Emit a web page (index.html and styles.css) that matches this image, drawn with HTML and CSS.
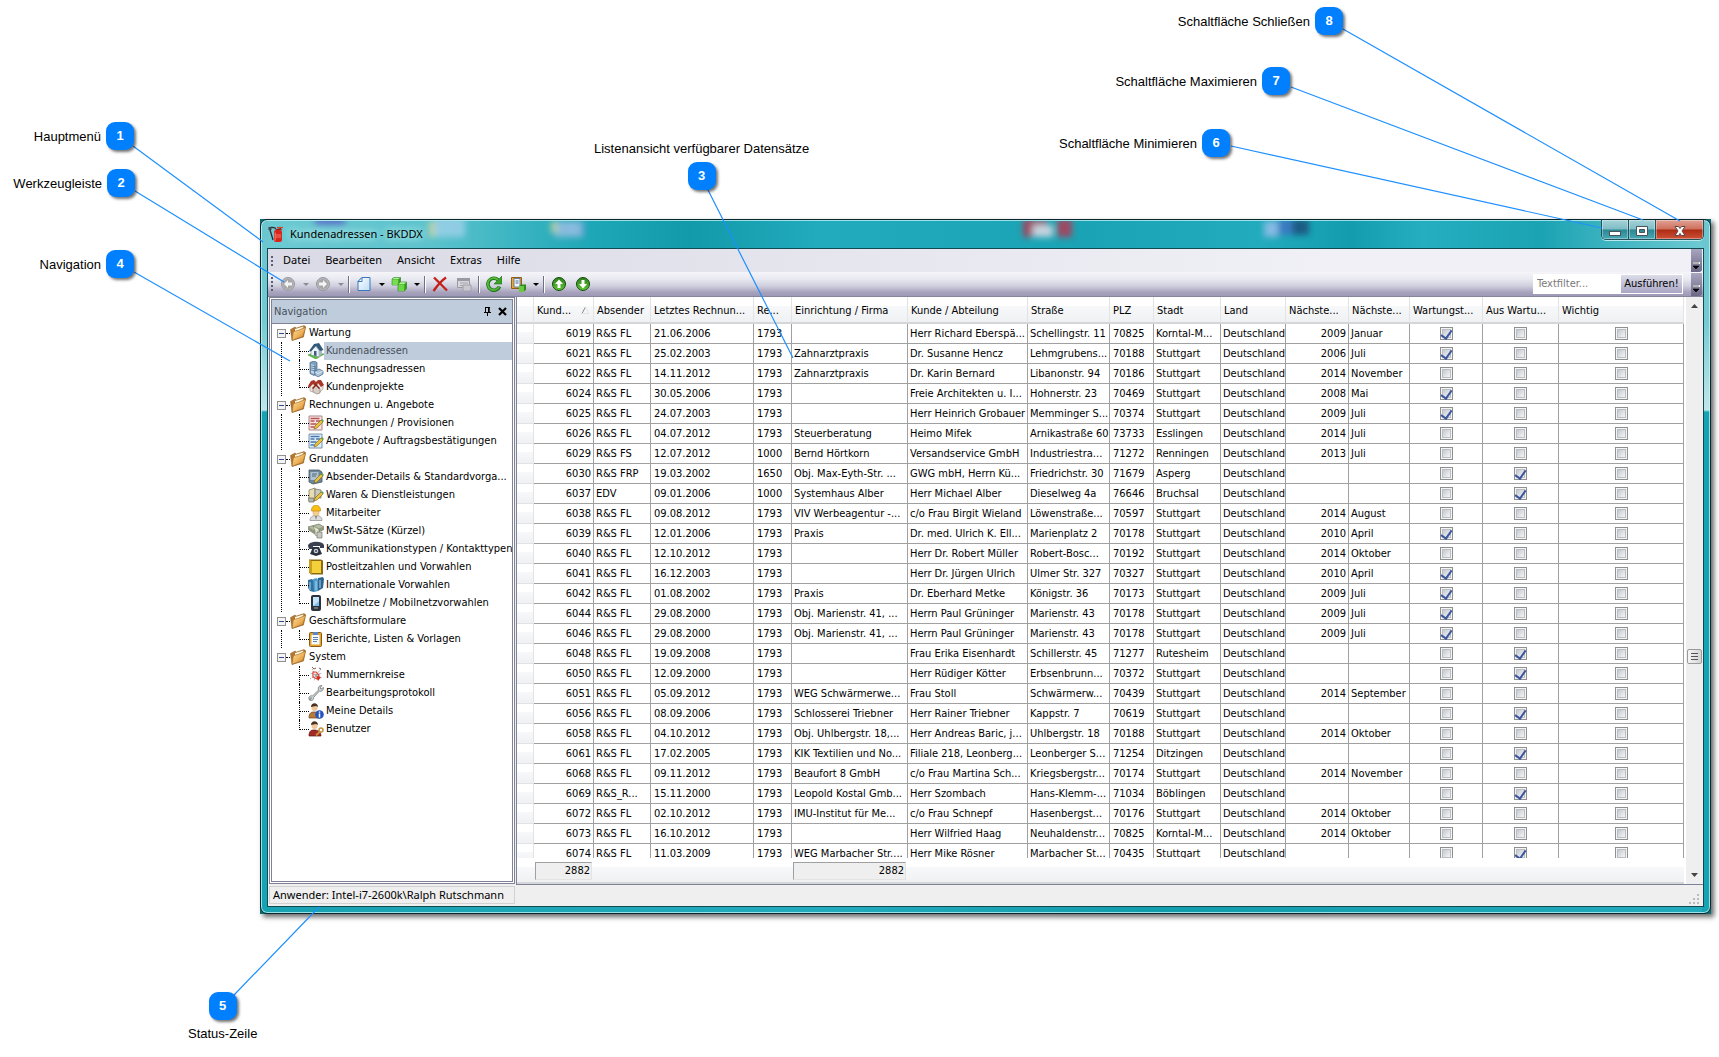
FILE: index.html
```html
<!DOCTYPE html>
<html lang="de">
<head>
<meta charset="utf-8">
<title>Kundenadressen - BKDDX</title>
<link rel="stylesheet" href="styles.css">
</head>
<body>
<svg class="defs" width="0" height="0" aria-hidden="true">
  <defs>
    <linearGradient id="gold" x1="0" y1="0" x2="1" y2="1"><stop offset="0" stop-color="#fde4a8"/><stop offset=".5" stop-color="#f0b65e"/><stop offset="1" stop-color="#c27824"/></linearGradient>
    <linearGradient id="dgreen" x1="0" y1="0" x2="0" y2="1"><stop offset="0" stop-color="#2f7d1e"/><stop offset="1" stop-color="#5cc832"/></linearGradient>
    <linearGradient id="page" x1="0" y1="0" x2="1" y2="1"><stop offset="0" stop-color="#fff"/><stop offset="1" stop-color="#bcdcf6"/></linearGradient>
    <filter id="soft" x="-30%" y="-30%" width="160%" height="160%"><feGaussianBlur stdDeviation="3"/></filter>
    <symbol id="i-folder" viewBox="0 0 16 16"><path d="M.5 4.500L5 2l1.500 1L14 .6l1.500 1L13.500 12 2 15.500z" fill="#b5762e" stroke="#8c5a20" stroke-width=".5"/><path d="M5 4l8.500-2.400-.8 4L5 7z" fill="#fff8e2"/><path d="M3.400 6.500l4.600-1 7.600-3.300L13 11.500 2 15.300z" fill="url(#gold)" stroke="#9a6424" stroke-width=".6"/></symbol>
    <symbol id="i-house" viewBox="0 0 16 16"><path d="M0 12l5-2 11 1-8 5z" fill="#5bbd3e" stroke="#2f8a22" stroke-width=".5"/><path d="M3 7l4-4 4 4v7l-4-1-4-1z" fill="#eef3f8" stroke="#7d8e9e" stroke-width=".6"/><path d="M11 7l3-1v5l-3 3z" fill="#a9b9c8"/><path d="M1 8l5-7 5-1 4.500 7L12 8 8 3 3 8.500z" fill="#33597a"/><path d="M6 8h2.500v5L6 12.500z" fill="#3c5d7c"/></symbol>
    <symbol id="i-building" viewBox="0 0 16 16"><path d="M2 1.500l4-1.500 3 1.500v11l-3 2-4-2z" fill="#7fa0bd" stroke="#3f617f" stroke-width=".7"/><path d="M3 3l3 1v9l-3-1z" fill="#bcd4e8"/><path d="M3 5l5 1M3 7l5 1M3 9l5 1" stroke="#4a6d8c" stroke-width=".7"/><path d="M7 10l4-2 4 2v3l-5 3-3-2z" fill="#a9c3da" stroke="#3f617f" stroke-width=".7"/><path d="M7 11l3 1.500 5-2.500" fill="none" stroke="#f4faff" stroke-width=".7"/></symbol>
    <symbol id="i-houses" viewBox="0 0 16 16"><path d="M2 7l3-3 3 3v5l-3 1-3-1zM9 6l2-3 4 3v4l-3 3-3-1z" fill="#ece6df" stroke="#8d7f76" stroke-width=".5"/><path d="M0 7l3-5 3-1 2 2 2-2 3 0 3 5-3 2-3-4-2 4-3-3-4 4z" fill="#a83528"/><path d="M5 9l3-3 4 4v4l-3 1-4-2z" fill="#d8cec4" stroke="#6d5a50" stroke-width=".5"/><path d="M4 9l4-4 4 4-1 1-3-3-3 3z" fill="#812318"/></symbol>
    <symbol id="i-redform" viewBox="0 0 16 16"><path d="M1 1h13v14H1z" fill="#fbe1e1" stroke="#a88"/><path d="M2.500 3.500h9M2.500 6h4M8 6h4M2.500 9h6M2.500 12h4" stroke="#b25656" stroke-width="1.400"/><path d="M6 14l1-3 6-6 2 2-6 6z" fill="#e9c13c" stroke="#6f6020" stroke-width=".6"/><path d="M13 5l1-1 2 2-1 1z" fill="#5aa84a"/></symbol>
    <symbol id="i-blueform" viewBox="0 0 16 16"><path d="M1 1h13v14H1z" fill="#dcecfb" stroke="#7890ac"/><path d="M2.500 3.500h9M2.500 6h4M8 6h4M2.500 9h6M2.500 12h4" stroke="#4a78ae" stroke-width="1.400"/><path d="M6 14l1-3 6-6 2 2-6 6z" fill="#e9c13c" stroke="#6f6020" stroke-width=".6"/><path d="M13 5l1-1 2 2-1 1z" fill="#5aa84a"/></symbol>
    <symbol id="i-note" viewBox="0 0 16 16"><path d="M1 1h10l3 2v10l-9 2-4-2z" fill="#6e8798" stroke="#3f5566" stroke-width=".8"/><path d="M2.500 3h8v8h-8z" fill="#aec2cf"/><path d="M4 5h5M4 7h4" stroke="#4c6678"/><path d="M6 14l1-3 6-6 2 2-6 6z" fill="#e9c13c" stroke="#6f6020" stroke-width=".6"/><path d="M13 5l1-1 2 2-1 1z" fill="#5aa84a"/></symbol>
    <symbol id="i-goods" viewBox="0 0 16 16"><path d="M1 3l6-2v12l-6-1z" fill="#e6ddb4" stroke="#857d5a" stroke-width=".8"/><path d="M7 2l6 1v8H7z" fill="#c9c9c0" stroke="#77776c" stroke-width=".8"/><path d="M0 11h6v4H1z" fill="#b4b6ae" stroke="#66685f" stroke-width=".7"/><path d="M6 14l1-3 6-6 2 2-6 6z" fill="#e9c13c" stroke="#6f6020" stroke-width=".6"/><path d="M13 5l1-1 2 2-1 1z" fill="#5aa84a"/></symbol>
    <symbol id="i-worker" viewBox="0 0 16 16"><path d="M2 15.500c0-3 2-5 6-5s6 2 6 5z" fill="#ddd" stroke="#888" stroke-width=".7"/><path d="M5 5h6v3c0 4-6 4-6 0z" fill="#f5cf92" stroke="#b98a4a" stroke-width=".4"/><path d="M3.500 5c0-6.500 9-6.500 9 0v1h-9z" fill="#f9bf14" stroke="#b97d06" stroke-width=".6"/><path d="M7 11l1 4 1-4z" fill="#7a7a7a"/></symbol>
    <symbol id="i-money" viewBox="0 0 16 16"><path d="M0 4l11-3 5 3-10 4z" fill="#b5bda4" stroke="#6f7761" stroke-width=".7"/><path d="M0 4v3l6 4 10-4V4L6 8z" fill="#8f987d"/><path d="M5 3l6 3v8l-4-2V8z" fill="#dfe6cd" stroke="#6f7761" stroke-width=".6"/><path d="M9 9h5v6H9z" fill="#c8c8c4" stroke="#77776c" stroke-width=".7"/></symbol>
    <symbol id="i-phone" viewBox="0 0 16 16"><path d="M0 5c0-5 14-6 16-1v3h-4V5H5v3H1z" fill="#3a4050"/><path d="M5 6h6l3 7-6 2-6-2z" fill="#2b303e"/><circle cx="8" cy="10" r="2.300" fill="#c9ced8"/><circle cx="8" cy="10" r="1" fill="#39404f"/></symbol>
    <symbol id="i-book" viewBox="0 0 16 16"><path d="M1 .6h12l2 1V15.400H3l-2-2z" fill="#8c6c12"/><path d="M4 2h9v12H4z" fill="#f3cf3a"/><path d="M1 1l3 1v13l-3-1.500z" fill="#caa01c"/></symbol>
    <symbol id="i-books" viewBox="0 0 16 16"><path d="M0 3l4-1 2 2v11l-4-1-2-3z" fill="#2f719f"/><path d="M5 2l4-1 1 2v11l-4 1z" fill="#4f9bcb"/><path d="M10 1l5-1 1 2-1 9-5 3z" fill="#2b6590"/><path d="M2 5v8M8 4v9M12 3v8" stroke="#bfe0f4" stroke-width=".9"/></symbol>
    <symbol id="i-mobile" viewBox="0 0 16 16"><rect x="3" y="0" width="10" height="16" rx="2" fill="#2d333c"/><path d="M5 2h6v9H5z" fill="#7fc0f0"/><path d="M5 11l6-5V2H5z" fill="#c4e4fb"/><path d="M6 13h4" stroke="#aaa"/></symbol>
    <symbol id="i-clip" viewBox="0 0 16 16"><rect x="1.500" y="1.500" width="12" height="14" rx="1" fill="#e7a42d" stroke="#8a5c12"/><path d="M3.500 4h8v9.500h-8z" fill="#f3f8ff"/><path d="M5 6.500h5M5 8.500h5M5 10.500h4" stroke="#5a86b8"/><path d="M5 1h5v3H5z" fill="#5a86c8"/></symbol>
    <symbol id="i-circles" viewBox="0 0 16 16"><path d="M8 8L4 2M8 8L2 6M8 8l-6 4M8 8l5-6M8 8l6-2M8 8l6 3M8 8l-2 6" stroke="#9aa" stroke-width="1" stroke-dasharray="2 1"/><path d="M5 5l3 0 3 3-2 4-4-2z" fill="none" stroke="#e04030" stroke-width="1.200"/><path d="M8 9l5 1-3 4z" fill="#d62a1c"/><path d="M4 0l2 2 2-1M11 1l2 1" stroke="#8a5a50" fill="none"/></symbol>
    <symbol id="i-wrench" viewBox="0 0 16 16"><path d="M1.500 15c-2-3 1-5 3-4l6-6c-1-3 1-4.500 3.500-4.500L12 3l1 1 2.500-1.500c0 3-2 4.500-4 3.500l-6 6.500c1 2-2 4-4 2.500l2-1.500-.6-1z" fill="#cfd3d4" stroke="#70787a" stroke-width=".8"/></symbol>
    <symbol id="i-userinfo" viewBox="0 0 16 16"><path d="M1 15c0-5 2-6 5-6s6 1 6 6z" fill="#b97a3a" stroke="#6b431c" stroke-width=".7"/><circle cx="6.500" cy="5" r="3" fill="#f0c79a"/><path d="M3 4c0-5 7-5 7 0L8 3z" fill="#4d3120"/><circle cx="11.500" cy="11.500" r="4.300" fill="#2454c0"/><path d="M11.500 10.500v4M11.500 8.400v1.300" stroke="#fff" stroke-width="1.500"/></symbol>
    <symbol id="i-userkey" viewBox="0 0 16 16"><path d="M1 15c0-5 2-6 5-6s7 1 7 6z" fill="#a32a26" stroke="#5b1512" stroke-width=".7"/><circle cx="6.500" cy="5" r="3" fill="#f0c79a"/><path d="M3 4c0-5 7-5 7 0L8 3z" fill="#4d3120"/><circle cx="13" cy="9" r="2" fill="none" stroke="#c4923a" stroke-width="1.500"/><path d="M12 10.500l-4 4" stroke="#c4923a" stroke-width="1.800"/></symbol>
    <symbol id="i-ext" viewBox="0 0 16 16"><path d="M8 2.500C4 .5 1 1 2 4s2 6 3 10" fill="none" stroke="#30282a" stroke-width="1.300"/><path d="M.5 1h3v3h-3z" fill="#445"/><rect x="6" y="4" width="8" height="12" rx="2" fill="#d8261c"/><path d="M6.500 6.500h1.500v8H6.500z" fill="#f0655a"/><path d="M8 3l5-1 1 2H7z" fill="#9b2018"/><path d="M9 1.500h6" stroke="#d8402c" stroke-width="1.200"/><path d="M8 9h5M8 11h5" stroke="#f0908a" stroke-width=".8"/></symbol>
    <symbol id="i-back" viewBox="0 0 16 16"><circle cx="8" cy="8" r="6.500" fill="#b9b9bc" stroke="#98989e"/><circle cx="8" cy="8" r="5" fill="#a6a6a8"/><path d="M8 4L4 8l4 4V9.500h4v-3H8z" fill="#f4f4f4"/></symbol>
    <symbol id="i-fwd" viewBox="0 0 16 16"><circle cx="8" cy="8" r="6.500" fill="#b9b9bc" stroke="#98989e"/><circle cx="8" cy="8" r="5" fill="#a6a6a8"/><path d="M8 4l4 4-4 4V9.500H4v-3h4z" fill="#f4f4f4"/></symbol>
    <symbol id="i-new" viewBox="0 0 16 16"><path d="M6 1.500h8v13H2v-9z" fill="url(#page)" stroke="#3d78bc"/><path d="M6 1.500v4H2z" fill="#fff" stroke="#3d78bc"/></symbol>
    <symbol id="i-cubes" viewBox="0 0 16 16"><path d="M1 3l2-1.500h6.500V7l-2 2H1z" fill="#2f9c1b" stroke="#1c6a10" stroke-width=".5"/><path d="M1.300 3.300h6V9h-6z" fill="#78dd52"/><path d="M7 8l2-2h6.500v6.500l-2 2.500H7z" fill="#2f9c1b" stroke="#1c6a10" stroke-width=".5"/><path d="M7.300 8.300h6V15h-6z" fill="#6cd646"/><path d="M1.500 3l1.700-1.200h6L7.500 3zM7.500 8l1.700-1.700h6L13.500 8z" fill="#b2f094"/></symbol>
    <symbol id="i-delete" viewBox="0 0 16 16"><path d="M2 1.500c3 3 9 9 13 13M14 1.500C9 5 5 10 1.500 15" fill="none" stroke="#c3201a" stroke-width="2.300"/></symbol>
    <symbol id="i-grid" viewBox="0 0 16 16"><path d="M1.500 2.500h12v9h-12z" fill="#d6d6dc" stroke="#9a9aa0"/><path d="M1 2h13v3H1z" fill="#9a9aa0"/><path d="M4 7h8M4 9.500h8" stroke="#a4a4aa"/><path d="M7 9h8v6H7z" fill="#c9c9cf" stroke="#a2a2a8"/></symbol>
    <symbol id="i-refresh" viewBox="0 0 16 16"><path d="M13.500 10.500A6 6 0 1 1 12 3.800" fill="none" stroke="#1f7516" stroke-width="3.600"/><path d="M13.200 10.500A6 6 0 1 1 12 3.800" fill="none" stroke="#55bb3c" stroke-width="1.800"/><path d="M16 0v8H8z" fill="#3aa326" stroke="#1f7516" stroke-width=".6"/></symbol>
    <symbol id="i-paste" viewBox="0 0 16 16"><path d="M1.500 1.500h10v11h-10z" fill="#e9aa33" stroke="#8f6112"/><path d="M4 2.500h6v8.500H4z" fill="#f2f6fc" stroke="#48689c" stroke-width=".8"/><path d="M5.500 5h3M5.500 7h3" stroke="#48689c"/><path d="M9 10l2-1.500h5V13.500l-2 2H9z" fill="#2f8a1b"/><path d="M9 10h5v6H9z" fill="#6ac940"/></symbol>
    <symbol id="i-up" viewBox="0 0 16 16"><circle cx="8" cy="8" r="6.500" fill="url(#dgreen)" stroke="#174d0e"/><path d="M8 3.500l4 4.500H9.500v4h-3V8H4z" fill="#fff"/></symbol>
    <symbol id="i-down" viewBox="0 0 16 16"><circle cx="8" cy="8" r="6.500" fill="url(#dgreen)" stroke="#174d0e"/><path d="M8 12.500L4 8h2.500V4h3v4H12z" fill="#fff"/></symbol>
    <symbol id="i-pin" viewBox="0 0 9 9"><path d="M2 .5h5M2.500 .5v5M6 .5v5M1 5.500h7M4.500 6v3" stroke="#000" fill="none"/><path d="M5 0h1.500v5.500H5z"/></symbol>
    <symbol id="i-x" viewBox="0 0 9 9"><path d="M1 1l7 7M8 1L1 8" stroke="#000" stroke-width="2.200"/></symbol>
  </defs>
</svg>

<main class="diagram">
  <section class="window-back">
  <div class="window">
    <header class="titlebar">
      <svg class="titlebar-reflection" width="1400" height="28" aria-hidden="true"><g filter="url(#soft)">
        <rect x="48" y="-6" width="30" height="10" fill="#5a62c8"/><rect x="168" y="-4" width="30" height="20" fill="#9fd0ea"/><rect x="162" y="0" width="6" height="16" fill="#d8d79a"/>
        <rect x="288" y="0" width="26" height="16" fill="#a2bfe6"/><rect x="284" y="0" width="6" height="12" fill="#d8d79a"/><rect x="314" y="0" width="3" height="16" fill="#7aa0dd"/>
        <rect x="756" y="-2" width="24" height="18" fill="#c0304e"/><rect x="766" y="4" width="20" height="12" fill="#f0dfe8"/><rect x="790" y="-2" width="15" height="18" fill="#c0304e"/>
        <rect x="997" y="0" width="14" height="16" fill="#9fc0ee"/><rect x="1011" y="-2" width="14" height="16" fill="#3f72c4"/><rect x="1025" y="-2" width="17" height="16" fill="#1c4a78"/></g>
      </svg>
      <svg class="icon"><use href="#i-ext"/></svg>
      <h1 class="title">Kundenadressen - BKDDX</h1>
      <div class="caption-buttons">
        <button class="cap" aria-label="Minimieren"><svg width="14" height="14"><rect x="1.500" y="7.500" width="11" height="4" fill="#fff" stroke="#4a5458"/></svg></button>
        <button class="cap" aria-label="Maximieren"><svg width="14" height="14"><path fill-rule="evenodd" d="M1.500 2.500h11v9h-11zM4.500 5.500v3h5v-3z" fill="#fff" stroke="#4a5458"/></svg></button>
        <button class="cap cap-close" aria-label="Schließen"><svg width="14" height="14"><path d="M2 2.500h3.500L7 4.500l1.500-2H12L9 7l3 4.500H8.500L7 9.500l-1.500 2H2L5 7z" fill="#fff" stroke="#5a4644"/></svg></button>
      </div>
    </header>

    <div class="client">
      <nav class="menubar">
        <span class="grip"></span>
        <button>Datei</button><button>Bearbeiten</button><button>Ansicht</button><button>Extras</button><button>Hilfe</button>
        <button class="overflow" aria-label="Menüoptionen"><svg width="7" height="8"><path d="M0 1h7" stroke="#fff" stroke-width="2"/><path d="M0 1h6M0 4h6L3 7z" fill="#000" stroke="#000" stroke-width=".6"/></svg></button>
      </nav>
      <div class="toolbar">
        <span class="grip grip-tall"></span>
        <button class="tb" aria-label="Zurück"><svg class="icon"><use href="#i-back"/></svg></button><button class="drop off" aria-label="Verlauf zurück"></button>
        <button class="tb" aria-label="Vorwärts"><svg class="icon"><use href="#i-fwd"/></svg></button><button class="drop off" aria-label="Verlauf vorwärts"></button>
        <span class="sep"></span>
        <button class="tb" aria-label="Neu"><svg class="icon"><use href="#i-new"/></svg></button><button class="drop" aria-label="Neu Optionen"></button>
        <button class="tb" aria-label="Objekte"><svg class="icon"><use href="#i-cubes"/></svg></button><button class="drop" aria-label="Objekt Optionen"></button>
        <span class="sep"></span>
        <button class="tb" aria-label="Löschen"><svg class="icon"><use href="#i-delete"/></svg></button>
        <button class="tb" aria-label="Formular"><svg class="icon"><use href="#i-grid"/></svg></button>
        <span class="sep"></span>
        <button class="tb" aria-label="Aktualisieren"><svg class="icon"><use href="#i-refresh"/></svg></button>
        <button class="tb" aria-label="Berichte"><svg class="icon"><use href="#i-paste"/></svg></button><button class="drop" aria-label="Bericht Optionen"></button>
        <span class="sep"></span>
        <button class="tb" aria-label="Vorheriger"><svg class="icon"><use href="#i-up"/></svg></button>
        <button class="tb" aria-label="Nächster"><svg class="icon"><use href="#i-down"/></svg></button>
        <form class="filter">
          <input type="text" placeholder="Textfilter..." aria-label="Textfilter">
          <button type="button">Ausführen!</button>
        </form>
        <button class="overflow" aria-label="Symbolleistenoptionen"><svg width="7" height="8"><path d="M0 1h7" stroke="#fff" stroke-width="2"/><path d="M0 1h6M0 4h6L3 7z" fill="#000" stroke="#000" stroke-width=".6"/></svg></button>
      </div>

      <div class="workspace">
        <aside class="navpanel">
          <header class="navhead"><h2>Navigation</h2>
            <button aria-label="Anheften"><svg width="9" height="9"><use href="#i-pin"/></svg></button>
            <button aria-label="Schließen"><svg width="9" height="9"><use href="#i-x"/></svg></button>
          </header>
          <ul class="tree">
            <li><div class="group"><span class="box"></span><svg class="icon"><use href="#i-folder"/></svg>Wartung</div>
              <ul>
                <li><svg class="icon"><use href="#i-house"/></svg><a href="#" class="current">Kundenadressen</a></li>
                <li><svg class="icon"><use href="#i-building"/></svg><a href="#">Rechnungsadressen</a></li>
                <li><svg class="icon"><use href="#i-houses"/></svg><a href="#">Kundenprojekte</a></li>
              </ul></li>
            <li><div class="group"><span class="box"></span><svg class="icon"><use href="#i-folder"/></svg>Rechnungen u. Angebote</div>
              <ul>
                <li><svg class="icon"><use href="#i-redform"/></svg><a href="#">Rechnungen / Provisionen</a></li>
                <li><svg class="icon"><use href="#i-blueform"/></svg><a href="#">Angebote / Auftragsbestätigungen</a></li>
              </ul></li>
            <li><div class="group"><span class="box"></span><svg class="icon"><use href="#i-folder"/></svg>Grunddaten</div>
              <ul>
                <li><svg class="icon"><use href="#i-note"/></svg><a href="#">Absender-Details &amp; Standardvorga...</a></li>
                <li><svg class="icon"><use href="#i-goods"/></svg><a href="#">Waren &amp; Dienstleistungen</a></li>
                <li><svg class="icon"><use href="#i-worker"/></svg><a href="#">Mitarbeiter</a></li>
                <li><svg class="icon"><use href="#i-money"/></svg><a href="#">MwSt-Sätze (Kürzel)</a></li>
                <li><svg class="icon"><use href="#i-phone"/></svg><a href="#">Kommunikationstypen / Kontakttypen</a></li>
                <li><svg class="icon"><use href="#i-book"/></svg><a href="#">Postleitzahlen und Vorwahlen</a></li>
                <li><svg class="icon"><use href="#i-books"/></svg><a href="#">Internationale Vorwahlen</a></li>
                <li><svg class="icon"><use href="#i-mobile"/></svg><a href="#">Mobilnetze / Mobilnetzvorwahlen</a></li>
              </ul></li>
            <li><div class="group"><span class="box"></span><svg class="icon"><use href="#i-folder"/></svg>Geschäftsformulare</div>
              <ul>
                <li><svg class="icon"><use href="#i-clip"/></svg><a href="#">Berichte, Listen &amp; Vorlagen</a></li>
              </ul></li>
            <li><div class="group"><span class="box"></span><svg class="icon"><use href="#i-folder"/></svg>System</div>
              <ul>
                <li><svg class="icon"><use href="#i-circles"/></svg><a href="#">Nummernkreise</a></li>
                <li><svg class="icon"><use href="#i-wrench"/></svg><a href="#">Bearbeitungsprotokoll</a></li>
                <li><svg class="icon"><use href="#i-userinfo"/></svg><a href="#">Meine Details</a></li>
                <li><svg class="icon"><use href="#i-userkey"/></svg><a href="#">Benutzer</a></li>
              </ul></li>
          </ul>
        </aside>

        <section class="gridpanel">
          <div class="gridmain">
            <div class="viewport">
              <table class="records">
                <colgroup><col class="w-mark"><col class="w-nr"><col class="w-abs"><col class="w-date"><col class="w-re"><col class="w-firma"><col class="w-kunde"><col class="w-str"><col class="w-plz"><col class="w-stadt"><col class="w-land"><col class="w-jahr"><col class="w-monat"><col class="w-wt"><col class="w-aus"><col></colgroup>
                <thead><tr><th></th><th>Kund...<svg class="sort" width="9" height="8"><path d="M1 7.500L4.500 1" stroke="#888" fill="none"/><path d="M4.500 1L8 7.500H1" stroke="#e4e4e4" fill="none"/></svg></th><th>Absender</th><th>Letztes Rechnun...</th><th>Re...</th><th>Einrichtung / Firma</th><th>Kunde / Abteilung</th><th>Straße</th><th>PLZ</th><th>Stadt</th><th>Land</th><th>Nächste...</th><th>Nächste...</th><th>Wartungst...</th><th>Aus Wartu...</th><th>Wichtig</th></tr></thead>
                <tbody id="rows"></tbody>
              </table>
            </div>
            <footer class="sums"><output class="sum-nr">2882</output><output class="sum-firma">2882</output></footer>
          </div>
          <div class="scrollbar">
            <svg width="7" height="4"><path d="M0 4l3.500-4L7 4z" fill="#444"/></svg>
            <span class="thumb"></span>
            <svg width="7" height="4"><path d="M0 0h7L3.500 4z" fill="#444"/></svg>
          </div>
        </section>
      </div>

      <footer class="status"><span class="user">Anwender: Intel-i7-2600k\Ralph Rutschmann</span>
        <svg width="10" height="10"><path d="M8 0h2v2H8zM4 4h2v2H4zM8 4h2v2H8zM0 8h2v2H0zM4 8h2v2H4zM8 8h2v2H8z" fill="#bbb"/></svg>
      </footer>
    </div>
  </div>
  </section>

  <svg class="leaders" width="1719" height="1057" aria-hidden="true"><path d="M133 146L263 242M135 191L284 282M134 272L290 361M707 188L793 358M234 995L319 907M1231 146L1602 228M1291 87L1643 220M1343 29L1680 221"/></svg>

  <div class="callout c1"><span>Hauptmenü</span><b>1</b></div>
  <div class="callout c2"><span>Werkzeugleiste</span><b>2</b></div>
  <div class="callout c4"><span>Navigation</span><b>4</b></div>
  <div class="callout c6"><span>Schaltfläche Minimieren</span><b>6</b></div>
  <div class="callout c7"><span>Schaltfläche Maximieren</span><b>7</b></div>
  <div class="callout c8"><span>Schaltfläche Schließen</span><b>8</b></div>
  <div class="callout stacked c3"><span>Listenansicht verfügbarer Datensätze</span><b>3</b></div>
  <div class="callout stacked c5"><b>5</b><span>Status-Zeile</span></div>
</main>
<script src="app.js"></script>
</body>
</html>
```
FILE: styles.css
```css
* { box-sizing: border-box; }
body { margin: 0; background: #fff; color: #000; font: 11px/14px "DejaVu Sans Condensed", "DejaVu Sans", sans-serif; }
button, input { font: inherit; color: inherit; margin: 0; padding: 0; border: 0; background: none; }
button { display: flex; align-items: center; justify-content: center; }
h1, h2 { margin: 0; font: inherit; }
ul { list-style: none; margin: 0; padding: 0; }
.defs { position: absolute; }
.icon { width: 16px; height: 16px; flex: none; display: block; }

.diagram { position: relative; padding: 219px 8px 143px 260px; overflow: hidden; }

/* window frame */
.window-back { background: #0c6a70; box-shadow: 3px 3px 5px rgba(0,0,0,.6); }
.window {
  border: 1px solid #08282d; border-radius: 7px; padding: 0 6px 6px;
  box-shadow: inset 0 0 0 1px rgba(200,245,248,.75);
  background:
    linear-gradient(#6ac5cf 0, #74cad3 100px, #c0e6ea 190px, #16a3b3 192px) 0 0 / 8px 100% no-repeat,
    linear-gradient(#6ac5cf 0, #74cad3 100px, #c0e6ea 190px, #16a3b3 192px) 100% 0 / 8px 100% no-repeat,
    linear-gradient(90deg, #18a2b2, #22abbc 560px, #129dad 900px, #22abbc 100%) 0 100% / 100% 8px no-repeat,
    linear-gradient(90deg, #6ccad2 0, #5cc3cd 170px, #1ea7b7 330px, #129aab 430px, #22abbc 560px, #1aa3b4 820px, #22abbc 1000px, #129cad 1090px, #24aebf 1160px, #1ba3b3 1280px, #6cc9d2 1440px);
}
.titlebar { position: relative; height: 28px; display: flex; align-items: center; gap: 6px; padding-left: 1px; overflow: hidden; font: 11px/16px "Noto Sans", sans-serif; }
.titlebar-reflection { position: absolute; left: 0; top: 1px; opacity: .8; }
.titlebar > .icon, .title { position: relative; }
.title { text-shadow: 0 0 8px #c5f2f2, 0 0 10px #c5f2f2; }
.caption-buttons { position: relative; display: flex; align-self: flex-start; margin-left: auto; height: 20px; border: 1px solid #24505a; border-top: 0; border-radius: 0 0 5px 5px; overflow: hidden; box-shadow: 0 1px 0 #b8e8ec; }
.cap { width: 27px; padding-top: 2px; border-right: 1px solid #24505a; background: linear-gradient(#a5d3d9 0, #7fbcc5 9px, #2b8794 10px, #48a9b5 100%); box-shadow: inset 0 0 0 1px rgba(255,255,255,.35); }
.cap-close { width: 47px; border-right: 0; background: linear-gradient(#e0a295 0, #cf6f5c 9px, #ae2b14 10px, #cc5236 100%); }
.client { border: 1px solid #114a52; background: #efefef; }

/* menu and toolbar */
.menubar, .toolbar { display: flex; align-items: center; padding-right: 1px; }
.menubar { height: 23px; gap: 15px; font-family: "Noto Sans", sans-serif; background: linear-gradient(90deg, #dadae6, #f0f0f6 75%); }
.menubar button { padding-bottom: 2px; }
.grip { width: 8px; height: 12px; margin-right: -8px; background: radial-gradient(circle, #5c5c78 1px, transparent 1px) 0 0 / 8px 4px; }
.toolbar { height: 25px; border-bottom: 1px solid #85859b; background: linear-gradient(#f4f4f9 0, #e9e9f1 7px, #cfcfde 14px, #a9a4bd 20px, #9d98b5 100%); }
.grip-tall { height: 16px; margin-right: 0; }
.tb { width: 24px; height: 22px; }
.drop { width: 11px; height: 22px; }
.drop::after { content: ""; border: 3px solid transparent; border-top-color: #000; border-bottom: 0; }
.drop.off::after { border-top-color: #8c8c94; }
.sep { width: 6px; height: 17px; background: linear-gradient(90deg, transparent 2px, #6f6f88 2px, #6f6f88 3px, #fff 3px, #fff 4px, transparent 4px); }
.filter { display: flex; margin: 0 8px 0 auto; width: 150px; height: 20px; padding: 1px; background: #fff; }
.filter input { flex: 1; min-width: 0; padding: 0 3px; outline: 0; }
.filter input::placeholder { color: #7a7a7a; opacity: 1; }
.filter button { width: 61px; background: linear-gradient(#dcdce8, #a9a6c4); }
.overflow { width: 11px; height: 23px; align-items: flex-end; padding-bottom: 3px; background: linear-gradient(#a9a5bf, #6b6886); border-radius: 0 0 3px 0; }
.menubar .overflow { margin-left: auto; }

/* navigation tree */
.workspace { display: flex; }
.navpanel { flex: none; width: 246px; margin: 0 1px 1px; border: 3px double #7f8296; background: #fff; }
.navhead { display: flex; align-items: center; gap: 6px; height: 24px; padding: 0 5px 0 2px; background: #bfccdb; border-bottom: 1px solid #7f8296; }
.navhead h2 { flex: 1; color: #46505c; }
.tree { padding-left: 5px; }
.group { display: flex; align-items: center; height: 18px; line-height: 18px; }
.group .icon { margin-right: 3px; }
.group::before { content: ""; width: 4px; border-top: 1px dotted #000; }
.group .box { order: -1; width: 9px; height: 9px; border: 1px solid #919191; background: linear-gradient(#2f4a9a, #2f4a9a) center / 5px 1px no-repeat #f4f4f4; }
.tree ul { margin-left: 4px; padding-left: 17px; border-left: 1px dotted #000; }
.tree > li:last-child ul { border-left-color: transparent; }
.tree ul li { position: relative; display: flex; align-items: center; height: 18px; padding-left: 9px; }
.tree ul li::before, .tree ul li::after { content: ""; position: absolute; left: 0; width: 9px; height: 9px; border-left: 1px dotted #000; }
.tree ul li::before { top: 0; border-bottom: 1px dotted #000; }
.tree ul li::after { top: 9px; }
.tree ul li:last-child::after { display: none; }
.tree a { flex: 1; min-width: 0; padding-left: 2px; line-height: 18px; white-space: nowrap; color: #000; text-decoration: none; }
.tree a.current { background: #bfccdb; color: #46505c; }

/* record list */
.gridpanel { flex: 1; min-width: 0; display: flex; border: solid #7f8296; border-width: 0 0 1px 1px; background: #fff; }
.gridmain { flex: 1; min-width: 0; }
.viewport { height: 561px; overflow: hidden; }
.records { width: 100%; table-layout: fixed; border-collapse: separate; border-spacing: 0; }
.records th, .records td { text-align: left; font-weight: normal; white-space: nowrap; overflow: hidden; }
.records th { height: 27px; padding: 2px 0 0 3px; border-right: 1px solid #e2e3e6; border-bottom: 2px solid #d5d6d9; background: linear-gradient(#fff 9px, #f7f8fa 9px, #f0f1f3 100%); }
.records td { height: 20px; padding: 0 0 0 2px; border-right: 1px solid #a0a0a0; border-bottom: 1px solid #a0a0a0; }
.records td:first-child { border-color: #e2e3e6; background: linear-gradient(#fff 8px, #f7f8fa 8px, #f0f1f3); }
.records td.num { text-align: right; padding-right: 2px; }
.records td:nth-child(4), .records td:nth-child(5), .records td:nth-child(9) { padding-left: 3px; }
.records td.tick { padding: 0; }
.records input { appearance: none; display: block; width: 13px; height: 13px; margin: 0 auto; border: 1px solid #8e8f8f; background: linear-gradient(135deg, #c3c8d0, #f6f6f6) center / 7px 7px no-repeat #f4f4f4; box-shadow: inset 0 0 0 1px #f4f4f4, inset 0 0 0 2px #b9bdc4; }
.records input:checked::before { content: ""; display: block; width: 5px; height: 9px; margin: 0 auto; border: solid #3c57a0; border-width: 0 2px 2px 0; transform: rotate(35deg); }
.sort { margin-left: 10px; }
.w-mark { width: 17px; } .w-nr { width: 60px; } .w-abs { width: 57px; } .w-date { width: 103px; }
.w-re { width: 38px; } .w-firma { width: 116px; } .w-kunde { width: 120px; } .w-str { width: 82px; }
.w-plz { width: 44px; } .w-stadt { width: 67px; } .w-land { width: 65px; } .w-jahr { width: 63px; }
.w-monat { width: 61px; } .w-wt { width: 73px; } .w-aus { width: 76px; }
.sums { display: flex; align-items: flex-start; height: 26px; padding: 4px 0 0 18px; background: linear-gradient(#fff 9px, #f7f8fa 9px, #f0f1f3); border-bottom: 2px solid #d5d6d9; }
.sums output { height: 18px; line-height: 16px; padding-right: 1px; text-align: right; background: #efefef; border: 1px solid #a0a0a0; border-right-color: #e3e3e3; border-bottom-color: #e3e3e3; }
.sum-nr { width: 57px; }
.sum-firma { width: 113px; margin-left: 201px; }
.scrollbar { width: 19px; display: flex; flex-direction: column; align-items: center; padding: 7px 0; background: #efefef; border-left: 2px solid #fff; }
.thumb { width: 15px; height: 15px; margin: 341px 0 auto; border: 1px solid #9a9a9a; border-radius: 2px; background: repeating-linear-gradient(#555 0 1px, transparent 1px 3px) 3px 3px / 7px 7px no-repeat, linear-gradient(90deg, #f5f5f5, #d4d4d4); }

.status { display: flex; align-items: flex-end; justify-content: space-between; height: 21px; padding: 1px 4px 2px 1px; font-family: "Noto Sans", sans-serif; }
.user { height: 18px; width: 246px; padding-left: 3px; line-height: 16px; border: 1px solid #d2d2d2; white-space: nowrap; }

/* callouts */
.leaders { position: absolute; left: 0; top: 0; pointer-events: none; }
.leaders path { fill: none; stroke: #1e90ff; stroke-width: 1.2; }
.callout { position: absolute; display: flex; align-items: center; gap: 5px; font: 13px/18px "Liberation Sans", Arial, sans-serif; white-space: nowrap; }
.callout span { padding-top: 1px; }
.callout b { width: 28px; height: 28px; border-radius: 9px; background: #0080ff; color: #fff; text-align: center; line-height: 28px; box-shadow: 2px 2px 3px rgba(0,0,0,.55); }
.callout.stacked { flex-direction: column; gap: 4px; }
.c1 { right: 1585px; top: 122px; }
.c2 { right: 1584px; top: 169px; }
.c4 { right: 1585px; top: 250px; }
.c6 { right: 489px; top: 129px; }
.c7 { right: 429px; top: 67px; }
.c8 { right: 376px; top: 7px; }
.c3 { left: 594px; top: 139px; }
.c5 { left: 188px; top: 992px; }
```
FILE: app.js
```js
// Nr | Absender | Datum | Re | Firma | Kunde | Straße | PLZ | Stadt | Jahr | Monat | Haken (w = Wartung, a = aus Wartung)
const data = `6019|R&S FL|21.06.2006|1793||Herr Richard Eberspä...|Schellingstr. 11|70825|Korntal-M...|2009|Januar|w
6021|R&S FL|25.02.2003|1793|Zahnarztpraxis|Dr. Susanne Hencz|Lehmgrubens...|70188|Stuttgart|2006|Juli|w
6022|R&S FL|14.11.2012|1793|Zahnarztpraxis|Dr. Karin Bernard|Libanonstr. 94|70186|Stuttgart|2014|November|
6024|R&S FL|30.05.2006|1793||Freie Architekten u. I...|Hohnerstr. 23|70469|Stuttgart|2008|Mai|w
6025|R&S FL|24.07.2003|1793||Herr Heinrich Grobauer|Memminger S...|70374|Stuttgart|2009|Juli|w
6026|R&S FL|04.07.2012|1793|Steuerberatung|Heimo Mifek|Arnikastraße 60|73733|Esslingen|2014|Juli|
6029|R&S FS|12.07.2012|1000|Bernd Hörtkorn|Versandservice GmbH|Industriestra...|71272|Renningen|2013|Juli|
6030|R&S FRP|19.03.2002|1650|Obj. Max-Eyth-Str. ...|GWG mbH, Herrn Kü...|Friedrichstr. 30|71679|Asperg|||a
6037|EDV|09.01.2006|1000|Systemhaus Alber|Herr Michael Alber|Dieselweg 4a|76646|Bruchsal|||a
6038|R&S FL|09.08.2012|1793|VIV Werbeagentur -...|c/o Frau Birgit Wieland|Löwenstraße...|70597|Stuttgart|2014|August|
6039|R&S FL|12.01.2006|1793|Praxis|Dr. med. Ulrich K. Ell...|Marienplatz 2|70178|Stuttgart|2010|April|w
6040|R&S FL|12.10.2012|1793||Herr Dr. Robert Müller|Robert-Bosc...|70192|Stuttgart|2014|Oktober|
6041|R&S FL|16.12.2003|1793||Herr Dr. Jürgen Ulrich|Ulmer Str. 327|70327|Stuttgart|2010|April|w
6042|R&S FL|01.08.2002|1793|Praxis|Dr. Eberhard Metke|Königstr. 36|70173|Stuttgart|2009|Juli|w
6044|R&S FL|29.08.2000|1793|Obj. Marienstr. 41, ...|Herrn Paul Grüninger|Marienstr. 43|70178|Stuttgart|2009|Juli|w
6046|R&S FL|29.08.2000|1793|Obj. Marienstr. 41, ...|Herrn Paul Grüninger|Marienstr. 43|70178|Stuttgart|2009|Juli|w
6048|R&S FL|19.09.2008|1793||Frau Erika Eisenhardt|Schillerstr. 45|71277|Rutesheim|||a
6050|R&S FL|12.09.2000|1793||Herr Rüdiger Kötter|Erbsenbrunn...|70372|Stuttgart|||a
6051|R&S FL|05.09.2012|1793|WEG Schwärmerwe...|Frau Stoll|Schwärmerw...|70439|Stuttgart|2014|September|
6056|R&S FL|08.09.2006|1793|Schlosserei Triebner|Herr Rainer Triebner|Kappstr. 7|70619|Stuttgart|||a
6058|R&S FL|04.10.2012|1793|Obj. Uhlbergstr. 18,...|Herr Andreas Baric, j...|Uhlbergstr. 18|70188|Stuttgart|2014|Oktober|
6061|R&S FL|17.02.2005|1793|KIK Textilien und No...|Filiale 218, Leonberg...|Leonberger S...|71254|Ditzingen|||a
6068|R&S FL|09.11.2012|1793|Beaufort 8 GmbH|c/o Frau Martina Sch...|Kriegsbergstr...|70174|Stuttgart|2014|November|
6069|R&S_R...|15.11.2000|1793|Leopold Kostal Gmb...|Herr Szombach|Hans-Klemm-...|71034|Böblingen|||a
6072|R&S FL|02.10.2012|1793|IMU-Institut für Me...|c/o Frau Schnepf|Hasenbergst...|70176|Stuttgart|2014|Oktober|
6073|R&S FL|16.10.2012|1793||Herr Wilfried Haag|Neuhaldenstr...|70825|Korntal-M...|2014|Oktober|
6074|R&S FL|11.03.2009|1793|WEG Marbacher Str....|Herr Mike Rösner|Marbacher St...|70435|Stuttgart|||a`;

const body = document.getElementById('rows');
for (const line of data.split('\n')) {
  const f = line.split('|');
  const row = body.insertRow();
  row.insertCell();
  const cells = [...f.slice(0, 9), 'Deutschland', f[9], f[10]];
  cells.forEach((text, i) => {
    const cell = row.insertCell();
    cell.textContent = text;
    if (i === 0 || i === 10) cell.className = 'num';
  });
  [['Wartungstermin', f[11] === 'w'], ['Aus Wartung', f[11] === 'a'], ['Wichtig', false]].forEach(([label, on]) => {
    const cell = row.insertCell();
    cell.className = 'tick';
    const box = document.createElement('input');
    box.type = 'checkbox';
    box.checked = on;
    box.setAttribute('aria-label', label + ' ' + f[0]);
    cell.append(box);
  });
}
```
